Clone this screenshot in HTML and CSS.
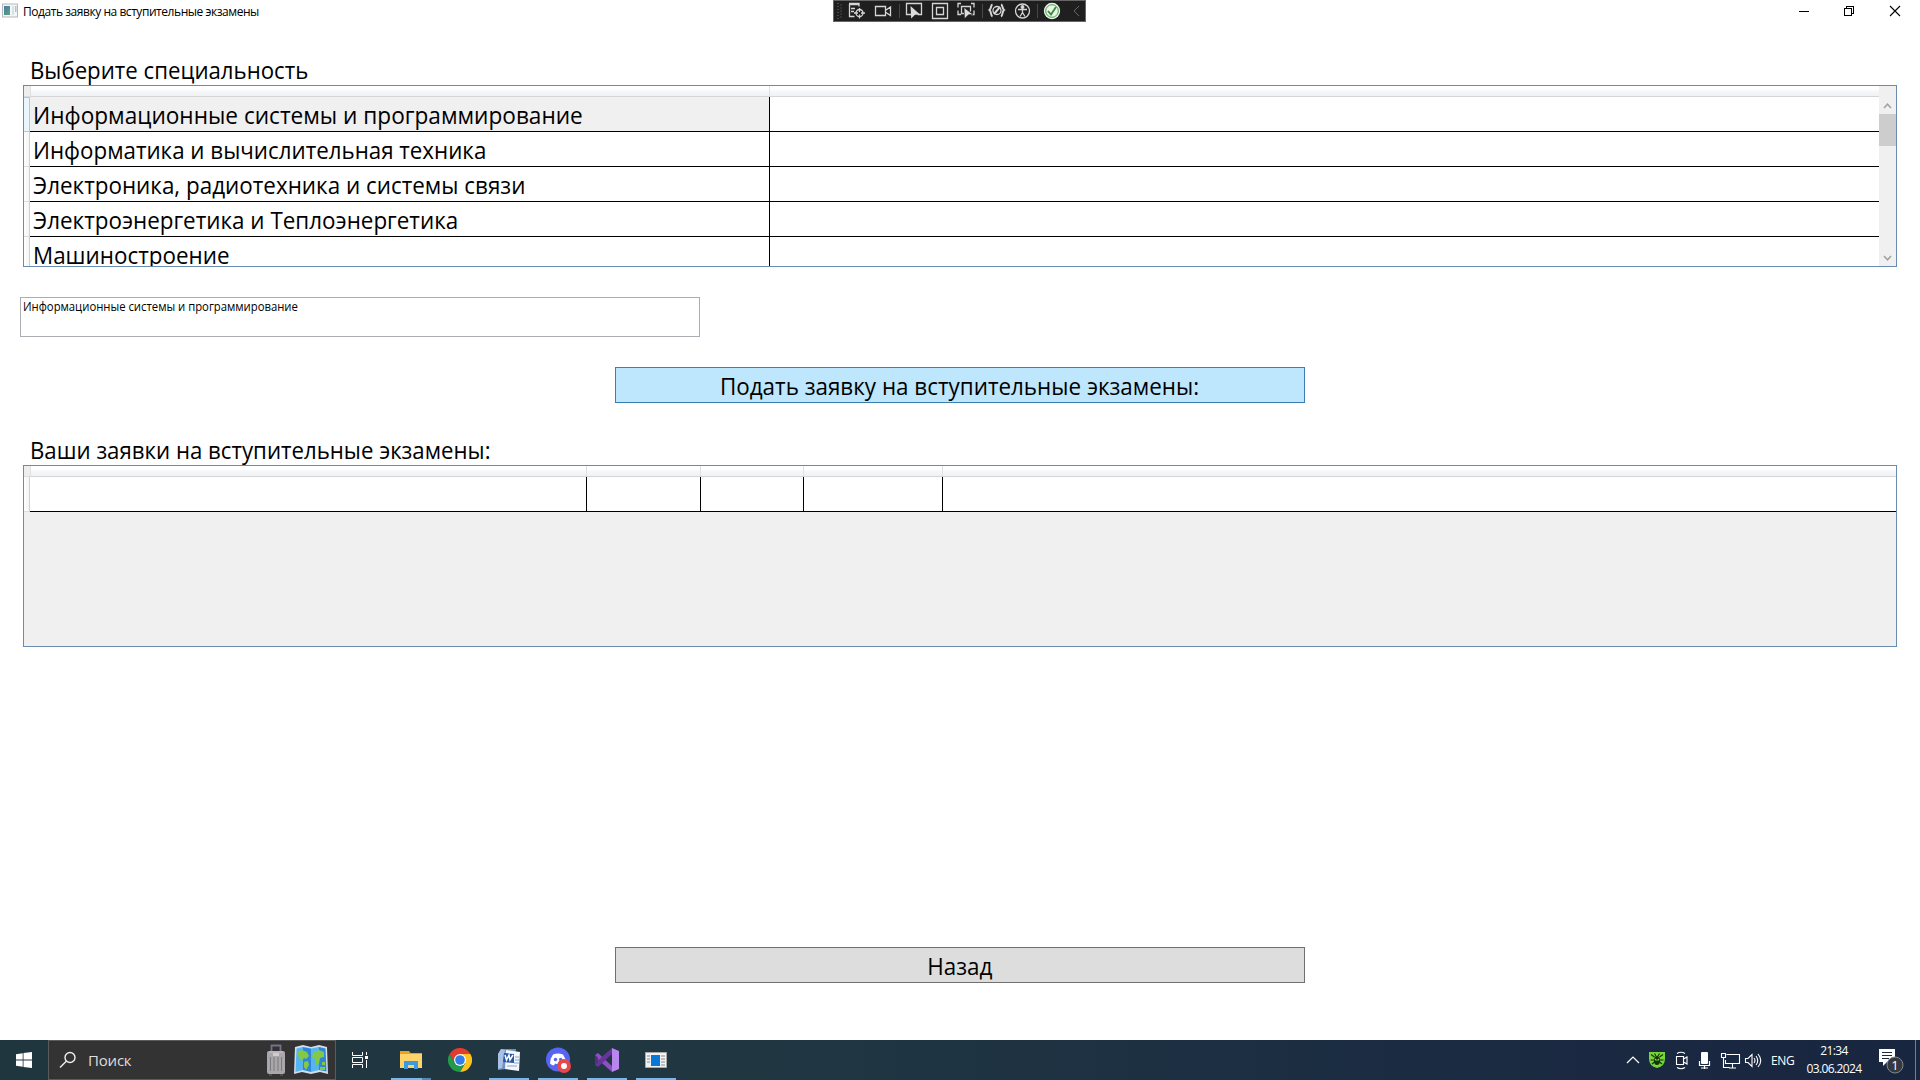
FILE: index.html
```html
<!DOCTYPE html>
<html lang="ru">
<head>
<meta charset="utf-8">
<title>Подать заявку на вступительные экзамены</title>
<link rel="stylesheet" href="styles.css">
</head>
<body>
<div class="screen">
  <header class="titlebar">
    <svg class="app-icon" width="16" height="16" viewBox="0 0 16 16"><defs><linearGradient id="ai" x1="0" y1="0" x2="1" y2="1"><stop offset="0" stop-color="#4a78a8"/><stop offset="1" stop-color="#58a878"/></linearGradient></defs><rect x=".5" y="1" width="15" height="13" fill="#f4f5f6" stroke="#b5b8ba"/><rect x="2" y="3" width="6" height="9" fill="url(#ai)"/><rect x="10" y="3" width="2" height="9" fill="#d4e4e4"/><rect x="13" y="3" width="1.500" height="6" fill="#a9c9b8"/></svg>
    <span class="title">Подать заявку на вступительные экзамены</span>
    <svg class="caption" width="112" height="20" viewBox="0 0 112 20" fill="none" stroke="#000" shape-rendering="crispEdges"><path d="M7 10.500h10M52.500 7.500h7v7h-7zM54.500 7v-1.500h7v7H60"/><path d="m98 5 10 10m0-10-10 10" shape-rendering="auto" stroke-width="1.100"/></svg>
  </header>

  <div class="debugbar">
    <svg width="253" height="22" viewBox="0 0 253 22" fill="none" stroke="#d6d6d6" stroke-width="1.300">
      <path d="M5 3v17M8 4.500v15" stroke="#777" stroke-width="1" stroke-dasharray="1 2"/>
      <path d="M16 3.500h10v3M16.500 4v12.500h5M18 8.500h4M18 11.500h3M16 4.500h10"/><circle cx="26.500" cy="13" r="3.500"/><path d="M26.500 8v4m0 2.500v4M21 13h4m3 0h4"/>
      <path d="M42.500 6.500h10v9h-10zM53 10l4.500-3v8.500L53 12.500"/>
      <path d="M66.500 4v14M149.500 4v14M204.500 4v14" stroke="#484848" stroke-width="1"/>
      <path d="M78 14.500h-4.500v-11h15v11h-4"/><path d="m77.500 6 9.500 8.500-5 .3-3.800 3.700z" fill="#ddd" stroke="none"/>
      <path d="M99.500 3.500h15v15h-15zM103.500 7.500h7v7h-7z"/>
      <path d="M128 3.500h-3v4m13-4h3v4m-16 3v4h3m13-4v4h-3M131 13.500h-2.500v-7h9v5"/><path d="m131 7.500 9 7-4.500.3-4 4z" fill="#ddd" stroke="#1f1f1f" stroke-width=".6"/>
      <path d="M159.500 4.500c-2 .5-1 4-3 5.500 2 1.500 1 5.500 3 6.500M168 4.500c2 .5 1 4 3 5.500-2 1.500-1 5.500-3 6.500" stroke-width="2"/><circle cx="164" cy="10.500" r="4"/><path d="m161 14 6-7" stroke-width="2"/>
      <circle cx="189.500" cy="11" r="7"/><circle cx="189.500" cy="7" r="1.300" fill="#ddd"/><path d="M185 9.500h9M189.500 10v3m0-.5-2.500 4m2.500-4 2.500 4"/>
      <circle cx="219" cy="11" r="7.500" fill="#e9f3e8" stroke="#e9f3e8"/><circle cx="219" cy="11" r="6.300" stroke="#46a146" stroke-width="1"/><path d="m215 11 3 3.500 5-7.500" stroke="#388a34" stroke-width="1.800"/>
      <path d="m246 6-5 5 5 5" stroke="#666" stroke-width="1"/>
    </svg>
  </div>

  <main class="content">
    <h2 class="label"><span class="fit l1">Выберите специальность</span></h2>
    <section class="grid grid-a">
      <div class="rowheads"><i class="corner"></i><i class="rh current"></i><i class="rh"></i><i class="rh"></i><i class="rh"></i><i class="rh"></i></div>
      <div class="table cols-a">
        <div class="heads"><b></b><b></b></div>
        <div class="row selected"><span><em class="fit r1">Информационные системы и программирование</em></span><span></span></div>
        <div class="row"><span><em class="fit r2">Информатика и вычислительная техника</em></span><span></span></div>
        <div class="row"><span><em class="fit r3">Электроника, радиотехника и системы связи</em></span><span></span></div>
        <div class="row"><span><em class="fit r4">Электроэнергетика и Теплоэнергетика</em></span><span></span></div>
        <div class="row"><span><em class="fit r5">Машиностроение</em></span><span></span></div>
      </div>
      <div class="scroll">
        <svg width="17" height="17" viewBox="0 0 17 17"><path d="M5 11 8.500 7.200 12 11" fill="none" stroke="#a3a3a3" stroke-width="1.600"/></svg>
        <div class="thumb"></div>
        <svg width="17" height="17" viewBox="0 0 17 17"><path d="m5 7 3.500 3.800L12 7" fill="none" stroke="#a3a3a3" stroke-width="1.600"/></svg>
      </div>
    </section>
    <div class="textbox"><span class="fit tb">Информационные системы и программирование</span></div>
    <button class="btn primary"><span class="fit b1">Подать заявку на вступительные экзамены:</span></button>
    <h2 class="label second"><span class="fit l2">Ваши заявки на вступительные экзамены:</span></h2>
    <section class="grid grid-b">
      <div class="rowheads"><i class="corner"></i><i class="rh"></i></div>
      <div class="table cols-b">
        <div class="heads"><b></b><b></b><b></b><b></b><b></b></div>
        <div class="row"><span></span><span></span><span></span><span></span><span></span></div>
      </div>
    </section>
    <button class="btn back"><span class="fit b2">Назад</span></button>
  </main>

  <footer class="taskbar">
    <div class="start"><svg width="16" height="16" viewBox="0 0 16 16" fill="#fff"><path d="M0 2.200 6.700 1.200V7.500H0zM7.500 1.100 16 0v7.500H7.500zM0 8.400h6.700v6.400L0 13.800zM7.500 8.400H16V16l-8.500-1.100z"/></svg></div>
    <div class="search">
      <svg width="18" height="18" viewBox="0 0 18 18" fill="none" stroke="#eee" stroke-width="1.400"><circle cx="11" cy="6.500" r="5"/><path d="m7.500 10-6.500 6.500"/></svg>
      <span>Поиск</span>
      <svg class="suitcase" width="20" height="34" viewBox="0 0 20 34"><path d="M5.500 10V2.500h9V10" fill="none" stroke="#77718a" stroke-width="1.800"/><rect x="1" y="8" width="18" height="23" rx="2" fill="#a9a7a9"/><path d="M4.500 14v14M8 14v14M12 14v14M15.500 14v14" stroke="#7c7a7e"/><path d="M3 9h14" stroke="#cbc8cc"/><rect x="7" y="10" width="6" height="3" fill="#d5c9d8"/><path d="M3 31h3v2H3zm11 0h3v2h-3z" fill="#4d4b50"/></svg>
      <svg class="map" width="36" height="32" viewBox="0 0 36 32"><path d="m2 3 8-2 8 2 8-2 8 2 1 27-8-2-9 2-9-2-8 2z" fill="#d5dceb"/><path d="m3.500 4.500 6.500-1.500v23l-7.500 2zM18 4.500 26 3v23l-8 2z" fill="#54b5f1"/><path d="m10 3 8 1.500V28l-8-2zM26 3l6.500 1.500 1 23L26 26z" fill="#2f86d8"/><path d="M4 8l5-2 5 2 2 4-3 3-2-1-2 3-3-3zM11 18l4-1 1 4-3 5-2-3zM20 9l6-3 5 2v5l-4 1-1 6-3 1-1-6-3-2zM29 18h3v3h-3zM27 23h5v3h-5z" fill="#83c847"/></svg>
    </div>
    <nav class="apps">
      <div class="app idle view"><svg width="18" height="18" viewBox="0 0 18 18" fill="none" stroke="#fff"><path d="M1.500 1v3.500h10V1M1.500 17v-3.500h10V17M1.500 6.500h10v5h-10zM15.500 1v3m0 5v8"/><path d="M14 5h3v3h-3z" fill="#fff" stroke="none"/></svg></div>
      <div class="app multi"><svg width="24" height="24" viewBox="0 0 24 24"><path d="M1 3h9l1.500 2H23v15H1z" fill="#e5a41c"/><path d="M1 6h22v14H1z" fill="#fdd36a"/><path d="M5 21v-8h14v8h-4v-4H9v4z" fill="#3b9ae0"/></svg></div>
      <div class="app idle"><svg width="24" height="24" viewBox="0 0 24 24"><path d="M12 6h10.400A12 12 0 0 1 12 24l5.200-9z" fill="#fcc31e"/><path d="M1.600 6l5.200 9a6 6 0 0 0 10.400 0L12 24A12 12 0 0 1 1.600 6z" fill="#229a4a"/><path d="M1.600 6A12 12 0 0 1 22.400 6H12a6 6 0 0 0-5.200 9z" fill="#e33b2e"/><circle cx="12" cy="12" r="6" fill="#fff"/><circle cx="12" cy="12" r="4.800" fill="#2f7de9"/></svg></div>
      <div class="app open"><svg width="24" height="24" viewBox="0 0 24 24"><path d="M4 1h15l-1 19-17 2V6z" fill="#6f92c6"/><path d="m4 1-3 5v15l4-1 3-18z" fill="#a9c1e4"/><path d="m9 2 14 2-1 19-14-2z" fill="#f3f6fb"/><path d="M18 9h4m-4 3h4m-5 3h5m-12 3h10" stroke="#8aa4cc"/><path d="m7 5 10 1v9L6 14z" fill="#2858a5"/><path d="m8 7 1.500 5L12 7l1 5 3-5" fill="none" stroke="#fff" stroke-width="1.500"/></svg></div>
      <div class="app open"><svg width="26" height="26" viewBox="0 0 26 26"><circle cx="13" cy="12.500" r="12" fill="#5865f2"/><path d="M8 7.500q5-2 10 0 3 4 3 9-2 2-4 2l-1-2q-3 1-6 0l-1 2q-2 0-4-2 0-5 3-9z" fill="#fff"/><circle cx="10.500" cy="12.500" r="1.700" fill="#5865f2"/><circle cx="15.700" cy="12.500" r="1.700" fill="#5865f2"/><circle cx="19" cy="19" r="7" fill="#e8474c"/><circle cx="19" cy="19" r="3" fill="#fff"/></svg></div>
      <div class="app open"><svg width="24" height="24" viewBox="0 0 24 24"><path d="m0 7 3-2 15 14-1 5L0 9z" fill="#8c4fc4"/><path d="m0 17 3 2L18 5l-1-5L0 15z" fill="#67349b"/><path d="M0 7v10l3-2.500v-5z" fill="#563078"/><path d="M17 0 24 3v18l-7 3z" fill="#b985ee"/></svg></div>
      <div class="app open"><svg width="22" height="18" viewBox="0 0 22 18"><path d="M.5 1.500h21v15H.5z" fill="#f2f2f2" stroke="#a8a8a8"/><path d="M6 4h9v11H6z" fill="#0878d8"/><path d="M2 5h3m-3 3h3m-3 3h3m11-6h4m-4 3h4m-4 3h4m-4 3h4" stroke="#8a8a8a"/></svg></div>
    </nav>
    <div class="tray">
      <svg class="icons" width="140" height="24" viewBox="0 0 140 24" fill="none" stroke="#fff" stroke-width="1.200">
        <path d="m3 15 6-6 6 6"/>
        <path d="M25 4h16v7q0 7-8 9-8-2-8-9z" fill="#76d635" stroke="none"/><path d="m27 6.500 3.500 2.500m8.500-2.500-3.500 2.500M26.500 12h4m5 0h4m-11.500 4 3-2.500m7 2.500-3-2.500M30.500 5.500l1.500 2.500m3.500-2.500-1.500 2.500" stroke="#102e09" stroke-width="1.100"/><ellipse cx="33" cy="12.500" rx="3" ry="4.500" fill="#14330b" stroke="none"/><path d="m31 11 1.500 1.500m2.500-1.500-1.500 1.500" stroke="#7bdc45"/>
        <path d="M52.500 8.500h7v8h-7zM59.500 11l3.500-2v7l-3.500-2M53 5.500q4-2.500 8 0m-8 14q4 2.500 8 0" stroke-width="1.100"/>
        <rect x="77" y="4" width="7" height="12" rx="1" fill="#fff" stroke="none"/><path d="M75.500 13v4.500h10V13m-5 5v3M77 20h7"/>
        <path d="M102.500 6.500h13v9h-14V12m7 3.500v4m-3.500.500h7M97.500 5.500h4v4h-4zM99.500 10v9.500h6" stroke-width="1.100"/>
        <path d="M121.500 10.500h2.500l4-4v12l-4-4h-2.500zM130 10q2 2.500 0 5m2-7q3.500 4.500 0 9m2-11q5.500 6.500 0 13" stroke-width="1.100"/>
      </svg>
      <span class="lang">ENG</span>
      <div class="clock"><span>21:34</span><span>03.06.2024</span></div>
      <div class="notify"><svg width="26" height="28" viewBox="0 0 26 28"><path d="M1 3h16v13H9l-4 4v-4H1z" fill="#fff"/><path d="M4 6.500h10M4 9.500h10M4 12.500h7" stroke="#1b2941"/><circle cx="17" cy="19" r="8" fill="#34383f" stroke="#84888e"/></svg><b>1</b></div>
      <div class="peek"></div>
    </div>
  </footer>
</div>
</body>
</html>
```
FILE: styles.css
```css
* { box-sizing: border-box; }
body { margin: 0; background: #fff; color: #000; font-family: "Open Sans", "Noto Sans", sans-serif; overflow: hidden; }
.screen { position: relative; width: 1920px; height: 1080px; display: flex; flex-direction: column; }

/* condensed text runs */
.fit { display: inline-block; white-space: nowrap; transform-origin: 0 50%; font-style: normal; transform: scaleX(.934); }
.l1, .l2 { transform: scaleX(.926); }
.r1, .tb { transform: scaleX(.942); }
.r2 { transform: scaleX(.93); }

/* window caption */
.titlebar { height: 22px; display: flex; align-items: center; padding-left: 2px; }
.title { margin-left: 5px; padding-top: 2px; font-size: 12px; line-height: 20px; letter-spacing: -.45px; }
.caption { margin-left: auto; margin-right: 16px; }
.debugbar { position: absolute; left: 833px; top: 0; width: 253px; height: 22px; background: #1f1f1f; border: 1px solid #666; }
.debugbar svg { display: block; margin: -1px; }

/* form */
.content { flex: 1; display: flex; flex-direction: column; align-items: flex-start; padding: 32px 23px 0; }
.label { margin: 0 0 0 7px; height: 31px; font-size: 24px; line-height: 32px; font-weight: 400; }
.grid { width: 1874px; height: 182px; border: 1px solid #688caf; display: flex; overflow: hidden; background: #f0f0f0; }
.rowheads { width: 6px; flex: none; }
.rowheads i { display: block; }
.corner { height: 11px; background: #eee; border-bottom: 1px solid #ddd; }
.rh { height: 35px; border-right: 1px solid #d0d0d0; border-bottom: 1px solid #ddd; background: linear-gradient(90deg, #fff, #f5f5f6); }
.rh.current { border: 1px solid #98d4ef; border-left: 0; background: #e9f6fc; }
.table { flex: 1; min-width: 0; }
.heads, .row { display: grid; }
.cols-a > div { grid-template-columns: 740px 1fr; }
.cols-b > div { grid-template-columns: 557px 114px 103px 139px 1fr; }
.heads { height: 11px; border-bottom: 1px solid #d5d5d5; background: linear-gradient(#fff 35%, #f8f9fa 40%, #f0f1f3); }
.heads b { border-right: 1px solid #dfe0e2; }
.heads b:first-child { border-left: 1px solid #e0e1e3; }
.heads b:last-child { border-right: 0; }
.row { height: 35px; background: #fff; border-bottom: 1px solid #000; }
.row span { height: 34px; border-right: 1px solid #000; font-size: 24px; line-height: 36px; padding-left: 3px; white-space: nowrap; min-width: 0; }
.row > span:last-child { border-right: 0; }
.selected span:first-child { background: #f0f0f0; }
.scroll { width: 17px; background: #f0f0f0; padding-top: 11px; display: flex; flex-direction: column; }
.scroll svg { display: block; flex: none; }
.thumb { height: 32px; background: #cdcdcd; margin-bottom: auto; }
.textbox { width: 680px; height: 40px; margin: 30px 0 0 -3px; border: 1px solid #abadb3; padding: 0 2px; font-size: 12px; line-height: 17px; }
.btn { width: 690px; height: 36px; padding: 0; border: 1px solid #707070; background: #ddd; color: #000; font: 24px/36px "Open Sans", "Noto Sans", sans-serif; align-self: center; display: flex; justify-content: center; align-items: flex-start; }
.btn .fit { transform-origin: 50% 50%; }
.primary { margin-top: 30px; background: #bee6fd; border-color: #3c7fb1; }
.second { margin-top: 31px; }
.back { margin-top: 300px; }

/* taskbar */
.taskbar { height: 40px; display: flex; background: linear-gradient(90deg, #20363e, #203742 40%, #1b2b42 75%, #18263f); color: #fff; }
.start { width: 48px; display: flex; align-items: center; justify-content: center; }
.search { width: 288px; background: #333; border: 1px solid #5c5c5c; display: flex; align-items: center; padding-left: 10px; font-size: 15px; color: #ddd; }
.search span { margin-left: 11px; letter-spacing: -.2px; }
.suitcase { margin-left: auto; }
.map { margin: 0 6px 0 7px; }
.apps { display: flex; gap: 9px; margin-left: 4px; }
.app { width: 40px; height: 40px; display: flex; align-items: center; justify-content: center; border-bottom: 2px solid transparent; padding-top: 2px; }
.view { margin-right: 2px; }
.open { border-color: #76b9ed; }
.multi { background: linear-gradient(90deg, #76b9ed 31px, #5588b5 31px) 0 38px / 40px 2px no-repeat border-box; }
.tray { margin-left: auto; display: flex; align-items: center; font-size: 12px; }
.lang { margin-left: 7px; width: 30px; letter-spacing: -.4px; }
.clock { width: 66px; display: flex; flex-direction: column; align-items: center; line-height: 18px; letter-spacing: -.6px; }
.notify { position: relative; width: 26px; height: 28px; margin-left: 11px; }
.notify b { position: absolute; left: 9px; top: 11px; width: 16px; text-align: center; font-size: 13px; font-weight: 400; line-height: 16px; }
.peek { width: 5px; height: 40px; margin-left: 11px; border-left: 1px solid #75808f; }
```
